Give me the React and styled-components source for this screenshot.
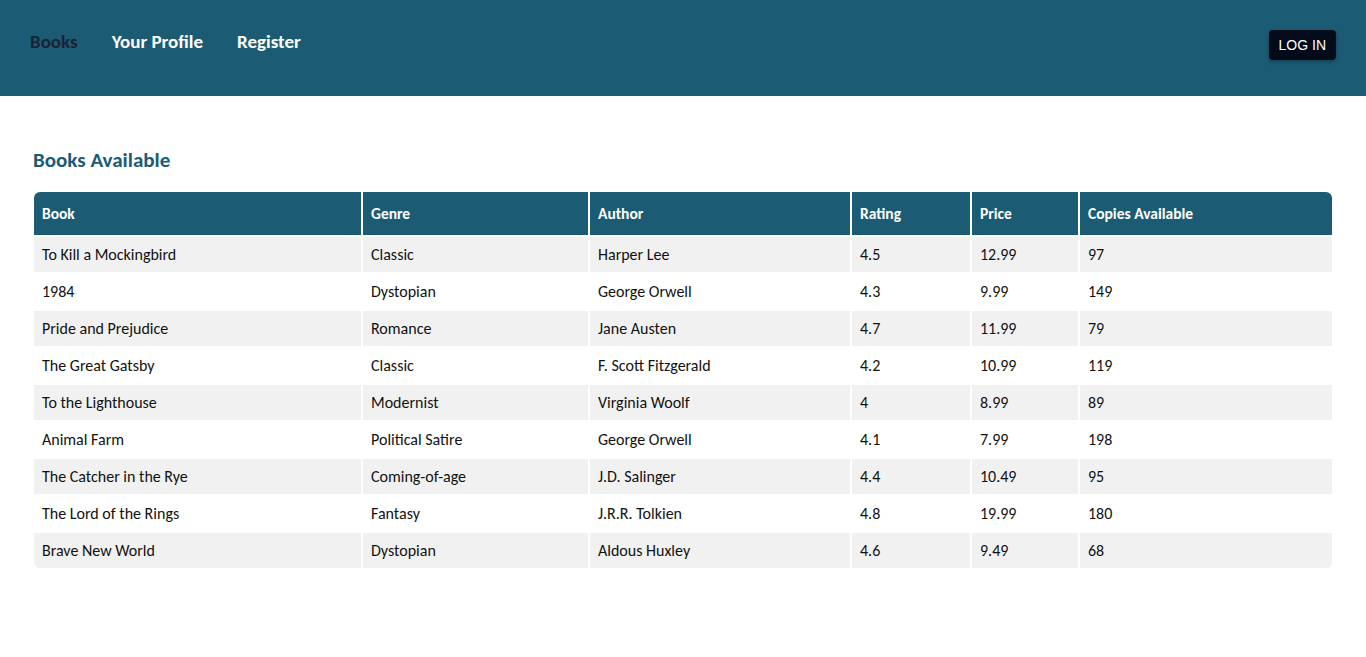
import React from "react";
import styled, { createGlobalStyle } from "styled-components";

const Global = createGlobalStyle`
  body { margin: 0; background: #fff; font-family: Calibri, Carlito, Lato, "Open Sans", sans-serif; }
`;

const NavBar = styled.header`
  height: 96px;
  background: #1b5c74;
  display: flex;
  align-items: flex-start;
  justify-content: space-between;
  padding: 0 30px;
  box-sizing: border-box;
`;

const Links = styled.nav`
  display: flex;
  gap: 34px;
  padding-top: 30px;
`;

const NavLink = styled.a`
  font-size: 19px;
  font-weight: 700;
  line-height: 24px;
  color: ${p => (p.$active ? "#1a2336" : "#ffffff")};
  text-decoration: none;
  cursor: pointer;
`;

const LoginButton = styled.button`
  margin-top: 30px;
  height: 30px;
  padding: 0 10px;
  background: #030a1a;
  color: #fff;
  border: none;
  border-radius: 4px;
  font-family: "Liberation Sans", Arial, sans-serif;
  font-size: 14px;
  box-shadow: 0 2px 4px rgba(0,0,0,0.3);
  cursor: pointer;
`;

const Main = styled.main`
  padding: 52px 32px 0;
`;

const Heading = styled.h2`
  margin: 0 0 18px 1px;
  font-size: 21px;
  line-height: 24px;
  font-weight: 700;
  color: #1b5c74;
`;

const Table = styled.table`
  width: 100%;
  table-layout: fixed;
  border-collapse: separate;
  border-spacing: 2px;
  font-size: 16px;
  color: #111;
`;

const Th = styled.th`
  background: #1b5c74;
  color: #fff;
  text-align: left;
  font-weight: 700;
  font-size: 15.5px;
  height: 43px;
  padding: 0 8px;
  box-sizing: border-box;
  &:first-child { border-top-left-radius: 6px; }
  &:last-child { border-top-right-radius: 6px; }
`;

const Tr = styled.tr`
  background: ${p => (p.$odd ? "#f1f1f1" : "#ffffff")};
  &:last-child td:first-child { border-bottom-left-radius: 6px; }
  &:last-child td:last-child { border-bottom-right-radius: 6px; }
`;

const Td = styled.td`
  height: 35px;
  padding: 0 8px;
  box-sizing: border-box;
  white-space: nowrap;
`;

const columns = [
  { label: "Book", width: 327 },
  { label: "Genre", width: 225 },
  { label: "Author", width: 260 },
  { label: "Rating", width: 118 },
  { label: "Price", width: 106 },
  { label: "Copies Available", width: 252 },
];

const books = [
  ["To Kill a Mockingbird", "Classic", "Harper Lee", "4.5", "12.99", "97"],
  ["1984", "Dystopian", "George Orwell", "4.3", "9.99", "149"],
  ["Pride and Prejudice", "Romance", "Jane Austen", "4.7", "11.99", "79"],
  ["The Great Gatsby", "Classic", "F. Scott Fitzgerald", "4.2", "10.99", "119"],
  ["To the Lighthouse", "Modernist", "Virginia Woolf", "4", "8.99", "89"],
  ["Animal Farm", "Political Satire", "George Orwell", "4.1", "7.99", "198"],
  ["The Catcher in the Rye", "Coming-of-age", "J.D. Salinger", "4.4", "10.49", "95"],
  ["The Lord of the Rings", "Fantasy", "J.R.R. Tolkien", "4.8", "19.99", "180"],
  ["Brave New World", "Dystopian", "Aldous Huxley", "4.6", "9.49", "68"],
];

export default function App() {
  return (
    <>
      <Global />
      <NavBar>
        <Links>
          <NavLink $active>Books</NavLink>
          <NavLink>Your Profile</NavLink>
          <NavLink>Register</NavLink>
        </Links>
        <LoginButton>LOG IN</LoginButton>
      </NavBar>
      <Main>
        <Heading>Books Available</Heading>
        <Table>
          <colgroup>
            {columns.map(c => (
              <col key={c.label} style={{ width: c.width }} />
            ))}
          </colgroup>
          <thead>
            <tr>
              {columns.map(c => (
                <Th key={c.label}>{c.label}</Th>
              ))}
            </tr>
          </thead>
          <tbody>
            {books.map((b, i) => (
              <Tr key={b[0]} $odd={i % 2 === 0}>
                {b.map((v, j) => (
                  <Td key={j}>{v}</Td>
                ))}
              </Tr>
            ))}
          </tbody>
        </Table>
      </Main>
    </>
  );
}
